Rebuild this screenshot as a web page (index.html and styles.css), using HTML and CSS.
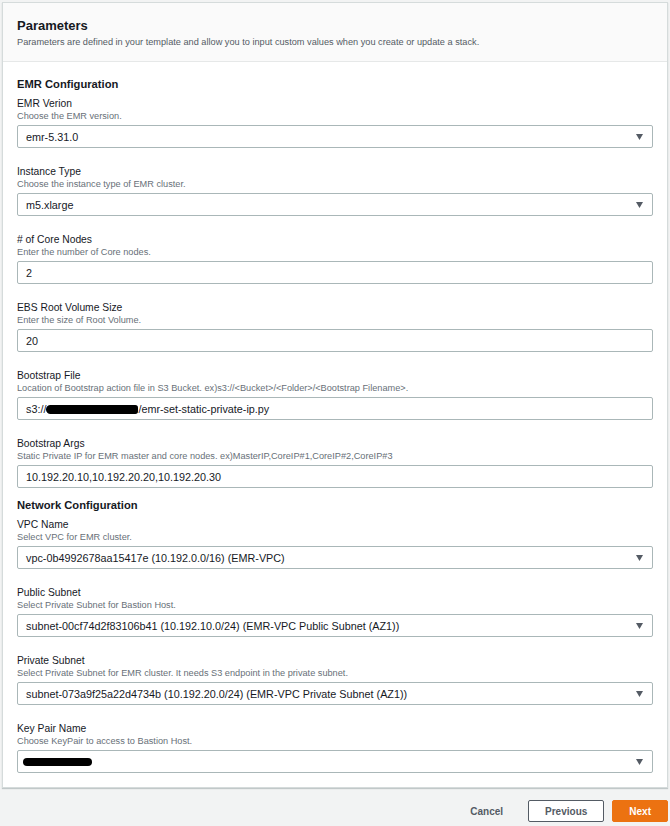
FILE: index.html
```html
<!DOCTYPE html>
<html>
<head>
<meta charset="utf-8">
<link rel="stylesheet" href="styles.css">
</head>
<body>
<div class="card">
  <div class="card-header">
    <h2 class="title">Parameters</h2>
    <p class="subtitle">Parameters are defined in your template and allow you to input custom values when you create or update a stack.</p>
  </div>
  <div class="card-body">
    <section class="section">
      <h3 class="section-title">EMR Configuration</h3>
      <div class="field">
        <div class="label">EMR Verion</div>
        <div class="desc">Choose the EMR version.</div>
        <div class="control select"><span>emr-5.31.0</span><svg class="caret" width="7" height="6" viewBox="0 0 7 6"><path d="M0 0H7L3.5 6Z" fill="#545b64"/></svg></div>
      </div>
      <div class="field">
        <div class="label">Instance Type</div>
        <div class="desc">Choose the instance type of EMR cluster.</div>
        <div class="control select"><span>m5.xlarge</span><svg class="caret" width="7" height="6" viewBox="0 0 7 6"><path d="M0 0H7L3.5 6Z" fill="#545b64"/></svg></div>
      </div>
      <div class="field">
        <div class="label"># of Core Nodes</div>
        <div class="desc">Enter the number of Core nodes.</div>
        <div class="control"><span>2</span></div>
      </div>
      <div class="field">
        <div class="label">EBS Root Volume Size</div>
        <div class="desc">Enter the size of Root Volume.</div>
        <div class="control"><span>20</span></div>
      </div>
      <div class="field">
        <div class="label">Bootstrap File</div>
        <div class="desc">Location of Bootstrap action file in S3 Bucket. ex)s3://&lt;Bucket&gt;/&lt;Folder&gt;/&lt;Bootstrap Filename&gt;.</div>
        <div class="control"><span>s3://<span class="redact redact-file"></span>/emr-set-static-private-ip.py</span></div>
      </div>
      <div class="field">
        <div class="label">Bootstrap Args</div>
        <div class="desc">Static Private IP for EMR master and core nodes. ex)MasterIP,CoreIP#1,CoreIP#2,CoreIP#3</div>
        <div class="control"><span>10.192.20.10,10.192.20.20,10.192.20.30</span></div>
      </div>
    </section>
    <section class="section section-next">
      <h3 class="section-title">Network Configuration</h3>
      <div class="field">
        <div class="label">VPC Name</div>
        <div class="desc">Select VPC for EMR cluster.</div>
        <div class="control select"><span>vpc-0b4992678aa15417e (10.192.0.0/16) (EMR-VPC)</span><svg class="caret" width="7" height="6" viewBox="0 0 7 6"><path d="M0 0H7L3.5 6Z" fill="#545b64"/></svg></div>
      </div>
      <div class="field">
        <div class="label">Public Subnet</div>
        <div class="desc">Select Private Subnet for Bastion Host.</div>
        <div class="control select"><span>subnet-00cf74d2f83106b41 (10.192.10.0/24) (EMR-VPC Public Subnet (AZ1))</span><svg class="caret" width="7" height="6" viewBox="0 0 7 6"><path d="M0 0H7L3.5 6Z" fill="#545b64"/></svg></div>
      </div>
      <div class="field">
        <div class="label">Private Subnet</div>
        <div class="desc">Select Private Subnet for EMR cluster. It needs S3 endpoint in the private subnet.</div>
        <div class="control select"><span>subnet-073a9f25a22d4734b (10.192.20.0/24) (EMR-VPC Private Subnet (AZ1))</span><svg class="caret" width="7" height="6" viewBox="0 0 7 6"><path d="M0 0H7L3.5 6Z" fill="#545b64"/></svg></div>
      </div>
      <div class="field">
        <div class="label">Key Pair Name</div>
        <div class="desc">Choose KeyPair to access to Bastion Host.</div>
        <div class="control select"><span class="redact redact-key"></span><svg class="caret" width="7" height="6" viewBox="0 0 7 6"><path d="M0 0H7L3.5 6Z" fill="#545b64"/></svg></div>
      </div>
    </section>
  </div>
</div>
<div class="actions">
  <button class="btn btn-link">Cancel</button>
  <button class="btn btn-normal">Previous</button>
  <button class="btn btn-primary">Next</button>
</div>
</body>
</html>
```

FILE: styles.css
```css
* { box-sizing: border-box; }
html, body { margin: 0; padding: 0; }
body {
  background: #f2f3f3;
  font-family: "Liberation Sans", Arial, sans-serif;
  color: #16191f;
  padding-top: 2px;
  width: 670px;
}
.card {
  margin: 0 2px 0 2px;
  background: #fff;
  border: 1px solid #d5dbdb;
  box-shadow: 0 1px 1px 0 rgba(0, 28, 36, 0.2);
}
.card-header {
  background: #fafafa;
  border-bottom: 1px solid #e6e8e8;
  padding: 15px 14px 13px 14px;
}
.title {
  margin: 0;
  font-size: 13px;
  line-height: 16px;
  font-weight: bold;
}
.subtitle {
  margin: 2px 0 0 0;
  font-size: 9.2px;
  line-height: 12px;
  color: #545b64;
}
.card-body {
  padding: 15px 14px 14px 14px;
}
.section-title {
  margin: 0 0 6px 0;
  font-size: 11.2px;
  line-height: 14px;
  font-weight: bold;
}
.section-next { margin-top: 10px; }
.field + .field { margin-top: 17px; }
.label {
  font-size: 10.3px;
  line-height: 14px;
}
.desc {
  font-size: 9.2px;
  line-height: 11px;
  color: #687078;
  margin-bottom: 3px;
}
.control {
  height: 23px;
  border: 1px solid #aab7b8;
  border-radius: 2px;
  padding: 0 9px 0 8px;
  display: flex;
  align-items: center;
  justify-content: space-between;
  font-size: 10.8px;
  color: #16191f;
  white-space: nowrap;
}
.caret { flex: none; }
.redact {
  display: inline-block;
  background: #000;
  vertical-align: middle;
}
.redact-file {
  width: 92px;
  height: 9px;
  border-radius: 5px 3px 3px 5px;
  margin-top: -1px;
}
.redact-key {
  width: 69px;
  height: 8px;
  border-radius: 4px;
  margin-left: -3px;
}
.actions {
  display: flex;
  justify-content: flex-end;
  gap: 8px;
  margin-top: 12px;
  padding-right: 2px;
}
.btn {
  height: 22px;
  padding: 0 16px;
  font-family: "Liberation Sans", Arial, sans-serif;
  font-size: 10px;
  font-weight: bold;
  border-radius: 2px;
  border: 1px solid transparent;
  background: transparent;
  color: #545b64;
  cursor: pointer;
}
.btn-normal {
  background: #fff;
  border-color: #545b64;
}
.btn-primary {
  background: #ec7211;
  border-color: #ec7211;
  color: #fff;
}
```
